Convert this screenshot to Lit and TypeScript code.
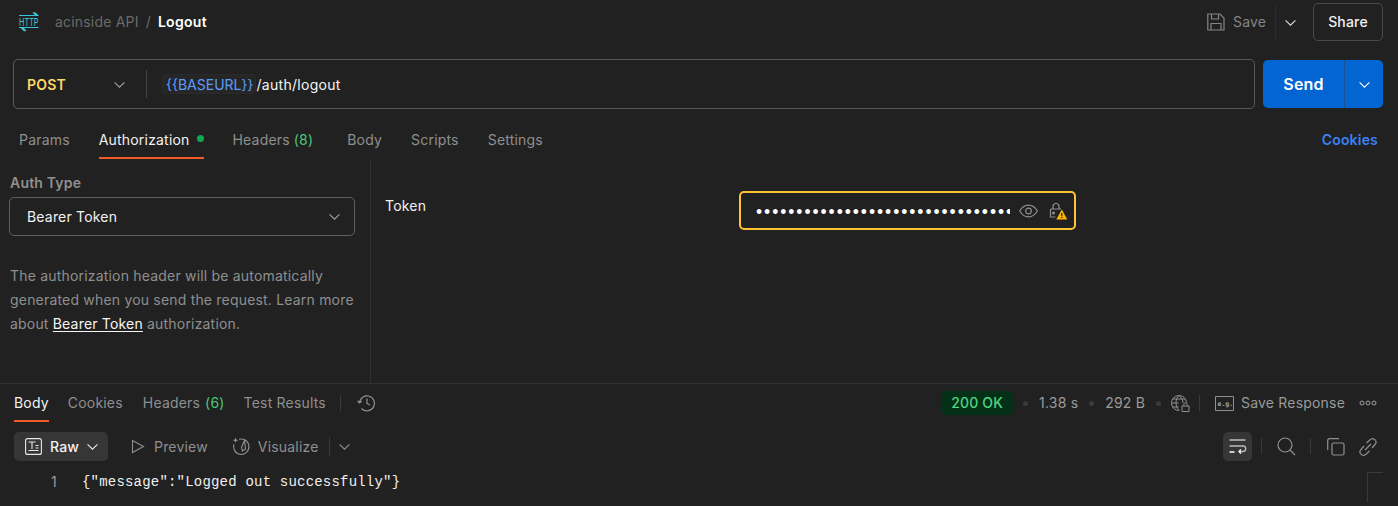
import { LitElement, html, css } from "lit";
import { customElement } from "lit/decorators.js";

const chev = (w = 10, c = "#b0b0b0") => html`<svg class="chev" width=${w} height=${w} viewBox="0 0 10 10" fill="none" stroke=${c} stroke-width="1"><path d="M.5 3l4.5 4.5L9.500 3"/></svg>`;

@customElement("app-root")
export class AppRoot extends LitElement {
  static styles = css`
    :host { display: block; width: 1398px; height: 506px; overflow: hidden; background: #212121; color: #f2f2f2; font-family: Inter, "Liberation Sans", sans-serif; font-size: 14px; letter-spacing: 0.19px; }
    * { box-sizing: border-box; }
    svg { display: block; flex: none; overflow: visible; }
    svg text { letter-spacing: 0; }
    .header { height: 44px; display: flex; align-items: center; padding: 0 15px 0 19px; }
    .crumb { margin-left: 16px; display: flex; gap: 7px; color: #6b6b6b; padding-bottom: 1px; }
    .crumb b { color: #fff; font-weight: 600; margin-left: 0; letter-spacing: 0.3px; }
    .sp { flex: 1; }
    .save { display: flex; align-items: center; gap: 8px; color: #858585; width: 68px; }
    .save span { padding-bottom: 1px; }
    .savechev { height: 38px; display: flex; align-items: center; border-left: 1px solid #2b2b2b; padding-left: 9px; width: 38px; }
    .share { width: 70px; height: 38px; padding-bottom: 1px; border: 1px solid #4a4a4a; border-radius: 5px; display: flex; align-items: center; justify-content: center; font-weight: 500; color: #f0f0f0; }
    .urlrow { display: flex; gap: 8px; padding: 15px 15px 0 13px; height: 65px; }
    .url { flex: 1; height: 50px; border: 1px solid #5a5a5a; border-radius: 5px; display: flex; align-items: center; }
    .method { width: 133px; height: 28px; padding: 0 0 0 13px; display: flex; align-items: center; justify-content: space-between; border-right: 1px solid #444; color: #ffd966; font-weight: 600; }
    .method .chev { margin-right: 21px; }
    .var { margin-left: 15px; height: 20px; padding: 0 2px 0 3px; border-radius: 4px; background: #262626; border: 1px solid #2a2a2a; color: #5b9dff; display: flex; align-items: center; letter-spacing: 0; }
    .path { color: #f5f5f5; letter-spacing: 0.3px; }
    .send { width: 120px; height: 48px; margin-top: 1px; border-radius: 5px; background: #0265d2; display: flex; align-items: center; color: #fff; }
    .send b { width: 81px; text-align: center; font-size: 16px; font-weight: 600; }
    .send i { flex: 1; height: 100%; border-left: 1px solid #1d4f8f; display: flex; align-items: center; justify-content: center; }
    .tabs { height: 51px; display: flex; padding: 15px 20px 0 19px; color: #8f8f8f; }
    .tab { height: 35px; padding-top: 7px; display: flex; gap: 4px; position: relative; line-height: 17px; }
    .tab.on { color: #f2f2f2; }
    .tab.on::after { content: ""; position: absolute; left: 0; right: 0; bottom: 0; height: 2px; background: #f15a29; }
    .tabs .tab { margin-right: 29px; }
    .tabs .tab.hdr { margin-right: 34px; }
    .dot { width: 7px; height: 7px; border-radius: 50%; background: #11a84f; margin: 4px 0 0 3px; }
    .count { color: #4cc57a; }
    .tabs .cookies { color: #3b82f6; font-weight: 600; margin-left: auto; margin-right: 0; }
    .auth-area { height: 224px; display: flex; border-bottom: 1px solid #333; }
    .left { width: 371px; border-right: 1px solid #303030; padding: 14px 15px 0 9px; }
    .label { color: #8f8f8f; font-weight: 600; line-height: 17px; padding-left: 1px; }
    .select { margin-top: 6px; height: 39px; border: 1px solid #5f5f5f; border-radius: 5px; display: flex; align-items: center; justify-content: space-between; padding: 0 14px 0 17px; color: #f2f2f2; }
    .desc { margin: 28px 0 0; padding-left: 1px; color: #8f8f8f; line-height: 24px; white-space: nowrap; }
    .desc a { color: #f5f5f5; text-decoration: underline; text-underline-offset: 2px; }
    .right { flex: 1; display: flex; padding: 31px 0 0 14px; }
    .token { width: 354px; color: #f2f2f2; line-height: 30px; height: 30px; }
    .field { width: 337px; height: 39px; border: 2px solid #ffc233; border-radius: 5px; display: flex; align-items: center; padding: 0 0 0 15px; }
    .dots { width: 254px; overflow: hidden; white-space: nowrap; font-family: "Liberation Sans", sans-serif; font-size: 17.5px; line-height: 24px; padding-top: 2px; letter-spacing: 1.94px; color: #fff; }
    .field .eye { margin-left: 9px; }
    .field .lock { margin-left: 11px; }
    .restabs { height: 38px; display: flex; align-items: flex-start; padding: 0 21px 0 14px; color: #8f8f8f; }
    .restabs .tab { height: 38px; padding-top: 10px; margin-right: 19px; }
    .restabs .tab.ck { margin-right: 20px; }
    .restabs .tab.hd { gap: 5px; }
    .restabs .tab.last { margin-right: 14px; }
    .sep { width: 1px; height: 16px; background: #3a3a3a; flex: none; }
    .restabs > .sep, .restabs > svg, .restabs > .status, .restabs > .meta, .restabs > .bul { align-self: center; }
    .hist { margin-left: 16px; }
    .status { width: 72px; height: 24px; padding-bottom: 1px; background: #033016; color: #4fd583; border-radius: 5px; display: flex; align-items: center; justify-content: center; font-weight: 500; margin-right: 10px; }
    .meta { color: #9a9a9a; margin: 0 11px 2px 0; }
    .bul { width: 5px; height: 5px; border-radius: 50%; background: #3a3a3a; margin-right: 11px; }
    .bul.b3 { margin-right: 9px; }
    .sep.s1 { margin: 0 15px 0 9px; }
    .restabs .meta.saveresp { margin: 0 14px 2px 7px; }
    .toolbar { height: 40px; padding: 10px 21px 0 14px; display: flex; align-items: flex-start; color: #8f8f8f; }
    .raw { width: 94px; height: 29px; background: #363636; border-radius: 5px; display: flex; align-items: center; padding-left: 11px; color: #f2f2f2; gap: 8px; font-weight: 500; }
    .tbtn { display: flex; align-items: center; height: 29px; gap: 8px; }
    .tbtn.prev { margin-left: 23px; }
    .tbtn.prev span { margin-left: 1px; }
    .tbtn.vis { margin-left: 24px; gap: 7px; }
    .sep.s2 { margin: 5px 9px 0 10px; height: 19px; }
    .wrapbtn { width: 29px; height: 29px; background: #363636; border-radius: 5px; display: flex; align-items: center; justify-content: center; }
    .sep.s3 { margin: 6px 15px 0 9px; }
    .sep.s4 { margin: 6px 16px 0 14px; }
    .ic { margin-top: 6px; }
    .ic.search { margin-top: 5px; }
    .ic.link { margin-left: 14px; }
    .code { display: flex; height: 35px; padding-top: 11px; font-family: "Liberation Mono", monospace; font-size: 14px; line-height: 18px; color: #f0f0f0; position: relative; letter-spacing: 0.2px; }
    .ln { width: 57px; text-align: right; color: #9a9a9a; font-family: Inter, sans-serif; font-size: 14px; }
    .src { margin-left: 25px; }
    .mini { position: absolute; left: 1367px; top: 10px; width: 16px; height: 30px; border-left: 1px solid #3a3a3a; border-top: 1px solid #3a3a3a; }
  `;

  render() {
    return html`
      <div class="header">
        <svg width="20" height="20" viewBox="0 0 20 20" fill="none" stroke="#39c6d8" stroke-width="1.100">
          <path d="M0 3.500h19.500M14 .5l3.500 3M15.500 .5l3.500 3"/>
          <text x="0" y="14" fill="#39c6d8" stroke="none" font-family="Inter" font-size="11" textLength="19.500" lengthAdjust="spacingAndGlyphs">HTTP</text>
          <path d="M0 15.500h19.500M2 15.500l3.500 3.500M3.500 15.500l3.500 3.500"/>
        </svg>
        <div class="crumb"><span>acinside API</span><span>/</span><b>Logout</b></div>
        <div class="sp"></div>
        <div class="save">
          <svg width="18" height="18" viewBox="0 0 18 18" fill="none" stroke="#858585" stroke-width="1.200"><path d="M.8 1h12.200l4 4v12H.8zM4.500 1v5h7V1M4 17v-6.500h10V17"/></svg>
          <span>Save</span>
        </div>
        <div class="savechev">${chev(11, "#e0e0e0")}</div>
        <div class="share">Share</div>
      </div>
      <div class="urlrow">
        <div class="url">
          <div class="method"><span>POST</span>${chev(11, "#a0a0a0")}</div>
          <div class="var">{{BASEURL}}</div><div class="path">/auth/logout</div>
        </div>
        <div class="send"><b>Send</b><i>${chev(11, "#fff")}</i></div>
      </div>
      <div class="tabs">
        <div class="tab">Params</div>
        <div class="tab on">Authorization<span class="dot"></span></div>
        <div class="tab hdr">Headers <span class="count">(8)</span></div>
        <div class="tab">Body</div>
        <div class="tab">Scripts</div>
        <div class="tab">Settings</div>
        <div class="tab cookies">Cookies</div>
      </div>
      <div class="auth-area">
        <div class="left">
          <div class="label">Auth Type</div>
          <div class="select"><span>Bearer Token</span>${chev(11, "#a0a0a0")}</div>
          <p class="desc">The authorization header will be automatically<br>generated when you send the request. Learn more<br>about <a>Bearer Token</a> authorization.</p>
        </div>
        <div class="right">
          <div class="token">Token</div>
          <div class="field">
            <div class="dots">••••••••••••••••••••••••••••••••••••••••</div>
            <svg class="eye" width="19" height="14" viewBox="0 0 19 14" fill="none" stroke="#8f8f8f" stroke-width="1.200"><path d="M.7 7C3 3 6 1.200 9.500 1.200S16 3 18.300 7C16 11 13 12.800 9.500 12.800S3 11 .7 7z"/><circle cx="9.500" cy="7" r="2.800"/></svg>
            <svg class="lock" width="19" height="18" viewBox="0 0 19 18" fill="none" stroke="#8f8f8f" stroke-width="1.200">
              <path d="M4 7V4.500a3 3 0 0 1 6 0V7M1.500 7h10.500M1.500 7v8h5"/><circle cx="4.500" cy="11" r=".9" fill="#8f8f8f"/>
              <path d="M12.800 7.500L18.300 17.500H7.300z" fill="#ffb400" stroke="none"/><path d="M12.800 11v3.200M12.800 15v1.100" stroke="#212121"/>
            </svg>
          </div>
        </div>
      </div>
      <div class="restabs">
        <div class="tab on">Body</div>
        <div class="tab ck">Cookies</div>
        <div class="tab hd">Headers <span class="count">(6)</span></div>
        <div class="tab last">Test Results</div>
        <div class="sep"></div>
        <svg class="hist" width="19" height="18" viewBox="0 0 19 18" fill="none" stroke="#8f8f8f" stroke-width="1.200"><path d="M2.500 9a7.500 7.500 0 1 1 2 5.500M.5 6.800l2 2.200 2.200-2M10 4.500V9.500l3 1.500"/></svg>
        <div class="sp"></div>
        <div class="status">200 OK</div>
        <span class="bul"></span><span class="meta">1.38 s</span>
        <span class="bul"></span><span class="meta">292 B</span>
        <span class="bul b3"></span>
        <svg width="20" height="18" viewBox="0 0 20 18" fill="none" stroke="#8f8f8f" stroke-width="1">
          <path d="M9 16.500A7.500 7.500 0 1 1 16.500 8.500M1.500 9h7M2.500 5h13M2.500 13h6M9 1.500C5 5 5 12 9 16.500M9 1.500C12 4 13 7 13 9"/>
          <path d="M12 12h7v5.500h-7zM13.800 12v-1.500a1.700 1.700 0 0 1 3.400 0V12"/>
        </svg>
        <div class="sep s1"></div>
        <svg width="19" height="15" viewBox="0 0 19 15" fill="none" stroke="#8f8f8f" stroke-width="1"><path d="M.5.500h18v14H.5z"/><text x="2.500" y="10" font-family="DejaVu Sans Mono" font-size="6.500" fill="#a5a5a5" stroke="none" font-weight="700">e.g.</text></svg>
        <span class="meta saveresp">Save Response</span>
        <svg width="18" height="6" viewBox="0 0 18 6" fill="none" stroke="#a0a0a0" stroke-width="1"><circle cx="3" cy="3" r="2"/><circle cx="9" cy="3" r="2"/><circle cx="15" cy="3" r="2"/></svg>
      </div>
      <div class="toolbar">
        <div class="raw">
          <svg width="17" height="17" viewBox="0 0 17 17" fill="none" stroke="#e8e8e8" stroke-width="1.100"><rect x=".6" y=".6" width="15.800" height="15.800" rx="2"/><path d="M3.500 4h7M7 4v7M3.500 12.500h10M10.500 7.500h3M10.500 10h3"/></svg>
          <span>Raw</span>
          ${chev(11, "#e8e8e8")}
        </div>
        <div class="tbtn prev">
          <svg width="14" height="15" viewBox="0 0 14 15" fill="none" stroke="#8f8f8f" stroke-width="1.100"><path d="M1.500 1.500L12.500 7.500 1.500 13.500z"/></svg>
          <span>Preview</span>
        </div>
        <div class="tbtn vis">
          <svg width="19" height="19" viewBox="0 0 19 19" fill="none" stroke="#8f8f8f" stroke-width="1.100"><path d="M7 2.300A7.700 7.700 0 1 1 2 7M12.500 3L9.500 10.500l1 3.500 3-2z"/><path d="M3.500 .5l.8 2 2 .8-2 .8-.8 2-.8-2-2-.8 2-.8z" fill="#8f8f8f" stroke="none"/></svg>
          <span>Visualize</span>
        </div>
        <div class="sep s2"></div>
        <div class="tbtn">${chev(11, "#8f8f8f")}</div>
        <div class="sp"></div>
        <div class="wrapbtn">
          <svg width="18" height="15" viewBox="0 0 18 15" fill="none" stroke="#bdbdbd" stroke-width="1.300"><path d="M.5 1h16M.5 7h13.500a2.500 2.500 0 0 1 0 5.500H10"/><path d="M.5 13h5M12 10.500l-2 2 2 2" stroke="#fff"/></svg>
        </div>
        <div class="sep s3"></div>
        <svg class="ic search" width="19" height="19" viewBox="0 0 19 19" fill="none" stroke="#8f8f8f" stroke-width="1.200"><circle cx="8" cy="8" r="7"/><path d="M13 13l5 5"/></svg>
        <div class="sep s4"></div>
        <svg class="ic" width="18" height="18" viewBox="0 0 18 18" fill="none" stroke="#8f8f8f" stroke-width="1.200"><path d="M12 .7H2.500a1.800 1.800 0 0 0-1.800 1.800V12"/><rect x="5" y="5" width="12" height="12" rx="1.500"/></svg>
        <svg class="ic link" width="18" height="18" viewBox="0 0 18 18" fill="none" stroke="#8f8f8f" stroke-width="1.200"><path d="M7.500 5L11 1.800a3.300 3.300 0 0 1 5 4.700L13 10M10.500 13L7 16.200a3.300 3.300 0 0 1-5-4.700L5 8M6 12l6-6"/></svg>
      </div>
      <div class="code">
        <div class="ln">1</div>
        <div class="src">{"message":"Logged out successfully"}</div>
        <div class="mini"></div>
      </div>
    `;
  }
}
